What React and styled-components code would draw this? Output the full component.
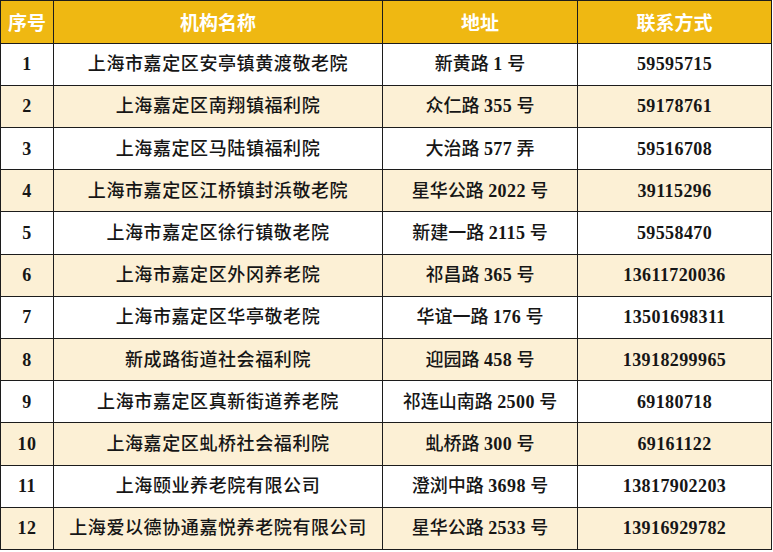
import React from "react";
import styled, { createGlobalStyle } from "styled-components";

const Global = createGlobalStyle`
  html, body { margin: 0; padding: 0; background: #ffffff; }
  body { font-family: "Liberation Serif", "Noto Sans CJK SC", serif; }
`;

const Table = styled.table`
  border-collapse: collapse;
  table-layout: fixed;
  width: 771px;
  margin: 0;
`;

const HeadRow = styled.tr`
  height: 42.7px;
  background: #efb812;
`;

const BodyRow = styled.tr`
  height: 42.2px;
  background: ${(p) => (p.$alt ? "#fcf0d5" : "#ffffff")};
`;

const Th = styled.th`
  border: 1px solid #1c1c1c;
  padding: 0;
  color: #ffffff;
  font-family: "Noto Sans CJK SC", "Noto Sans", sans-serif;
  font-weight: 700;
  font-size: 19px;
  text-align: center;
  vertical-align: middle;
  line-height: 1;
`;

const Td = styled.td`
  border: 1px solid #1c1c1c;
  padding: 0;
  color: #161616;
  font-family: "Liberation Serif", "Noto Sans CJK SC", serif;
  font-weight: 500;
  font-size: 18px;
  text-align: center;
  vertical-align: middle;
  line-height: 1;
  white-space: nowrap;
  letter-spacing: ${(p) => p.$spacing || "0"};
`;

const Num = styled.span`
  font-family: "Liberation Serif", serif;
  font-weight: 700;
  letter-spacing: 0.4px;
`;

const rows = [
  ["1", "上海市嘉定区安亭镇黄渡敬老院", "新黄路 1 号", "59595715"],
  ["2", "上海嘉定区南翔镇福利院", "众仁路 355 号", "59178761"],
  ["3", "上海嘉定区马陆镇福利院", "大治路 577 弄", "59516708"],
  ["4", "上海市嘉定区江桥镇封浜敬老院", "星华公路 2022 号", "39115296"],
  ["5", "上海市嘉定区徐行镇敬老院", "新建一路 2115 号", "59558470"],
  ["6", "上海市嘉定区外冈养老院", "祁昌路 365 号", "13611720036"],
  ["7", "上海市嘉定区华亭敬老院", "华谊一路 176 号", "13501698311"],
  ["8", "新成路街道社会福利院", "迎园路 458 号", "13918299965"],
  ["9", "上海市嘉定区真新街道养老院", "祁连山南路 2500 号", "69180718"],
  ["10", "上海嘉定区虬桥社会福利院", "虬桥路 300 号", "69161122"],
  ["11", "上海颐业养老院有限公司", "澄浏中路 3698 号", "13817902203"],
  ["12", "上海爱以德协通嘉悦养老院有限公司", "星华公路 2533 号", "13916929782"],
];

function Mixed({ text }) {
  const parts = text.split(/(\d+)/).filter((s) => s.length);
  return parts.map((s, i) => (/^\d+$/.test(s) ? <Num key={i}>{s}</Num> : <span key={i}>{s}</span>));
}

export default function App() {
  return (
    <>
      <Global />
      <Table>
        <colgroup>
          <col style={{ width: 53 }} />
          <col style={{ width: 329 }} />
          <col style={{ width: 195 }} />
          <col style={{ width: 194 }} />
        </colgroup>
        <thead>
          <HeadRow>
            <Th>序号</Th>
            <Th>机构名称</Th>
            <Th>地址</Th>
            <Th>联系方式</Th>
          </HeadRow>
        </thead>
        <tbody>
          {rows.map((r, i) => (
            <BodyRow key={r[0]} $alt={i % 2 === 1}>
              <Td><Num>{r[0]}</Num></Td>
              <Td $spacing="0.6px">{r[1]}</Td>
              <Td><Mixed text={r[2]} /></Td>
              <Td><Num>{r[3]}</Num></Td>
            </BodyRow>
          ))}
        </tbody>
      </Table>
    </>
  );
}
